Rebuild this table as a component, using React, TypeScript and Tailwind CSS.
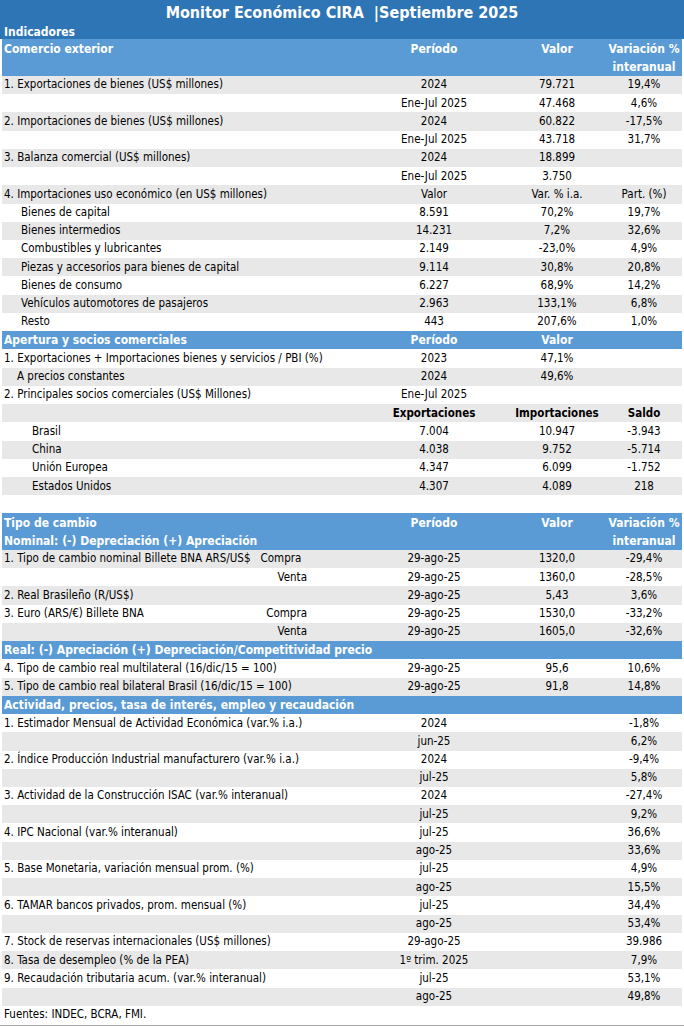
type Cells = [string?, string?, string?];

interface RowData {
  label?: string;
  indent?: number;
  cells?: Cells;
  gray?: boolean;
  bold?: boolean;
  side?: string;
  sideFirst?: boolean;
}

const font = {
  fontFamily: 'Tahoma, "DejaVu Sans Condensed", "Liberation Sans", sans-serif',
};

function Cell({ text, w, bold }: { text?: string; w: string; bold?: boolean }) {
  return (
    <div className={`${w} flex justify-center whitespace-nowrap ${bold ? "font-bold" : ""}`}>
      {text}
    </div>
  );
}

function Row({ r }: { r: RowData }) {
  const [p, v, x] = r.cells ?? [];
  return (
    <div
      className={`flex items-center h-[18.24px] text-[11.5px] text-black ${
        r.gray ? "bg-[#e8e8e8]" : "bg-white"
      }`}
    >
      <div className="w-[370px] flex items-center whitespace-nowrap pl-[2px]">
        <span style={{ paddingLeft: r.indent ?? 0 }}>{r.label}</span>
        {r.side && r.sideFirst && <span className="ml-[10px]">{r.side}</span>}
        {r.side && !r.sideFirst && (
          <span className="ml-auto mr-[65px]">{r.side}</span>
        )}
      </div>
      <Cell w="w-[124px]" text={p} bold={r.bold} />
      <Cell w="w-[122px]" text={v} bold={r.bold} />
      <Cell w="w-[52px]" text={x} bold={r.bold} />
    </div>
  );
}

function Header({
  title,
  sub,
  cells,
  double,
}: {
  title: string;
  sub?: string;
  cells: Cells;
  double?: boolean;
}) {
  const [p, v, x] = cells;
  const line = "h-[18.24px] flex items-center whitespace-nowrap";
  return (
    <div className="flex bg-[#5b9bd5] text-white font-bold text-[12px]">
      <div className="w-[370px] pl-[2px] flex flex-col">
        <div className={line}>{title}</div>
        {double && <div className={line}>{sub}</div>}
      </div>
      <div className={`w-[124px] justify-center ${line}`}>{p}</div>
      <div className={`w-[122px] justify-center ${line}`}>{v}</div>
      <div className="w-[52px] flex flex-col items-center">
        <div className={`justify-center ${line}`}>{x}</div>
        {double && <div className={`justify-center ${line}`}>interanual</div>}
      </div>
    </div>
  );
}

const comercio: RowData[] = [
  { label: "1. Exportaciones de bienes (US$ millones)", cells: ["2024", "79.721", "19,4%"], gray: true },
  { cells: ["Ene-Jul 2025", "47.468", "4,6%"] },
  { label: "2. Importaciones de bienes (US$ millones)", cells: ["2024", "60.822", "-17,5%"], gray: true },
  { cells: ["Ene-Jul 2025", "43.718", "31,7%"] },
  { label: "3. Balanza comercial (US$ millones)", cells: ["2024", "18.899"], gray: true },
  { cells: ["Ene-Jul 2025", "3.750"] },
  { label: "4. Importaciones uso económico (en US$ millones)", cells: ["Valor", "Var. % i.a.", "Part. (%)"], gray: true },
  { label: "Bienes de capital", indent: 17, cells: ["8.591", "70,2%", "19,7%"] },
  { label: "Bienes intermedios", indent: 17, cells: ["14.231", "7,2%", "32,6%"], gray: true },
  { label: "Combustibles y lubricantes", indent: 17, cells: ["2.149", "-23,0%", "4,9%"] },
  { label: "Piezas y accesorios para bienes de capital", indent: 17, cells: ["9.114", "30,8%", "20,8%"], gray: true },
  { label: "Bienes de consumo", indent: 17, cells: ["6.227", "68,9%", "14,2%"] },
  { label: "Vehículos automotores de pasajeros", indent: 17, cells: ["2.963", "133,1%", "6,8%"], gray: true },
  { label: "Resto", indent: 17, cells: ["443", "207,6%", "1,0%"] },
];

const apertura: RowData[] = [
  { label: "1. Exportaciones + Importaciones bienes y servicios / PBI (%)", cells: ["2023", "47,1%"] },
  { label: "A precios constantes", indent: 13, cells: ["2024", "49,6%"], gray: true },
  { label: "2. Principales socios comerciales (US$ Millones)", cells: ["Ene-Jul 2025"] },
  { cells: ["Exportaciones", "Importaciones", "Saldo"], gray: true, bold: true },
  { label: "Brasil", indent: 28, cells: ["7.004", "10.947", "-3.943"] },
  { label: "China", indent: 28, cells: ["4.038", "9.752", "-5.714"], gray: true },
  { label: "Unión Europea", indent: 28, cells: ["4.347", "6.099", "-1.752"] },
  { label: "Estados Unidos", indent: 28, cells: ["4.307", "4.089", "218"], gray: true },
];

const cambio: RowData[] = [
  { label: "1. Tipo de cambio nominal Billete BNA ARS/US$", side: "Compra", sideFirst: true, cells: ["29-ago-25", "1320,0", "-29,4%"], gray: true },
  { side: "Venta", cells: ["29-ago-25", "1360,0", "-28,5%"] },
  { label: "2.  Real Brasileño (R/US$)", cells: ["29-ago-25", "5,43", "3,6%"], gray: true },
  { label: "3.  Euro (ARS/€) Billete BNA", side: "Compra", cells: ["29-ago-25", "1530,0", "-33,2%"] },
  { side: "Venta", cells: ["29-ago-25", "1605,0", "-32,6%"], gray: true },
];

const real: RowData[] = [
  { label: "4. Tipo de cambio real multilateral (16/dic/15 = 100)", cells: ["29-ago-25", "95,6", "10,6%"] },
  { label: "5. Tipo de cambio real bilateral Brasil (16/dic/15 = 100)", cells: ["29-ago-25", "91,8", "14,8%"], gray: true },
];

const actividad: RowData[] = [
  { label: "1. Estimador Mensual de Actividad Económica (var.% i.a.)", cells: ["2024", "", "-1,8%"] },
  { cells: ["jun-25", "", "6,2%"], gray: true },
  { label: "2. Índice Producción Industrial manufacturero (var.% i.a.)", cells: ["2024", "", "-9,4%"] },
  { cells: ["jul-25", "", "5,8%"], gray: true },
  { label: "3. Actividad de la Construcción ISAC (var.% interanual)", cells: ["2024", "", "-27,4%"] },
  { cells: ["jul-25", "", "9,2%"], gray: true },
  { label: "4. IPC Nacional (var.% interanual)", cells: ["jul-25", "", "36,6%"] },
  { cells: ["ago-25", "", "33,6%"], gray: true },
  { label: "5. Base Monetaria, variación mensual prom. (%)", cells: ["jul-25", "", "4,9%"] },
  { cells: ["ago-25", "", "15,5%"], gray: true },
  { label: "6. TAMAR bancos privados, prom. mensual (%)", cells: ["jul-25", "", "34,4%"] },
  { cells: ["ago-25", "", "53,4%"], gray: true },
  { label: "7. Stock de reservas internacionales (US$ millones)", cells: ["29-ago-25", "", "39.986"] },
  { label: "8. Tasa de desempleo (% de la PEA)", cells: ["1º trim. 2025", "", "7,9%"], gray: true },
  { label: "9. Recaudación tributaria acum. (var.% interanual)", cells: ["jul-25", "", "53,1%"] },
  { cells: ["ago-25", "", "49,8%"], gray: true },
];

export default function App() {
  return (
    <div className="w-[684px] h-[1026px] bg-white overflow-hidden" style={font}>
      <div className="bg-[#2e75b6] text-white">
        <div className="h-[25px] flex items-center justify-center text-[16px] font-bold">
          Monitor Económico CIRA&nbsp;&nbsp;|Septiembre 2025
        </div>
        <div className="h-[14.4px] flex items-center pl-[4px] text-[12px] font-bold">
          Indicadores
        </div>
      </div>
      <div className="px-[2px]">
        <Header title="Comercio exterior" cells={["Período", "Valor", "Variación %"]} double />
        {comercio.map((r, i) => (
          <Row key={`c${i}`} r={r} />
        ))}
        <Header title="Apertura y socios comerciales" cells={["Período", "Valor"]} />
        {apertura.map((r, i) => (
          <Row key={`a${i}`} r={r} />
        ))}
        <div className="h-[18.24px]" />
        <Header
          title="Tipo de cambio"
          sub="Nominal: (-) Depreciación (+) Apreciación"
          cells={["Período", "Valor", "Variación %"]}
          double
        />
        {cambio.map((r, i) => (
          <Row key={`t${i}`} r={r} />
        ))}
        <Header title="Real: (-) Apreciación (+) Depreciación/Competitividad precio" cells={[]} />
        {real.map((r, i) => (
          <Row key={`r${i}`} r={r} />
        ))}
        <Header title="Actividad, precios, tasa de interés, empleo y recaudación" cells={[]} />
        {actividad.map((r, i) => (
          <Row key={`x${i}`} r={r} />
        ))}
        <Row r={{ label: "Fuentes: INDEC, BCRA, FMI." }} />
      </div>
      <div className="h-[3px] bg-[#a6a6a6] mt-[1px]" />
    </div>
  );
}
